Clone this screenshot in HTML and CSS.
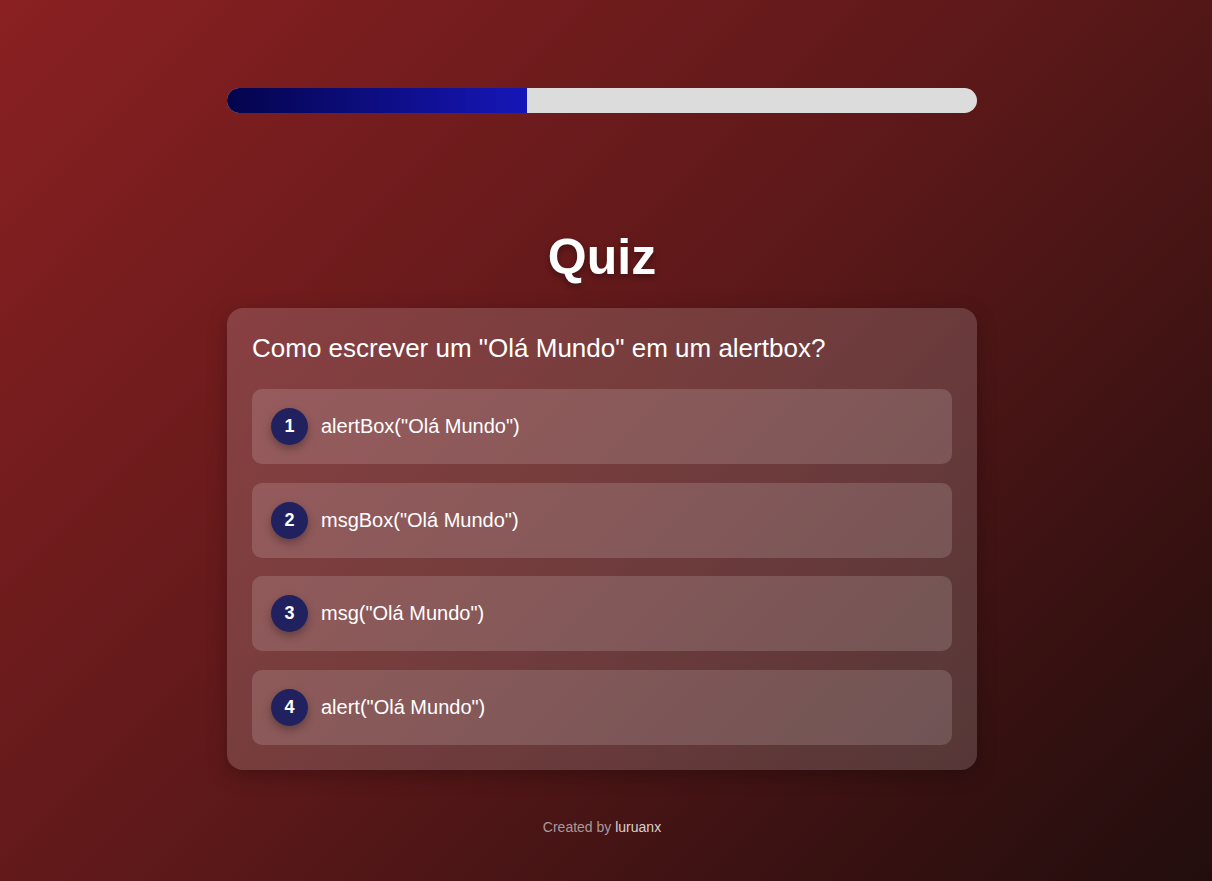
FILE: index.html
```html
<!DOCTYPE html>
<html lang="pt">
<head>
<meta charset="utf-8">
<title>Quiz</title>
<link rel="stylesheet" href="styles.css">
</head>
<body>
<main class="app">
  <div class="progress"><div class="progress-fill" style="width:40%"></div></div>
  <h1 class="title">Quiz</h1>
  <section class="card">
    <h2 class="question">Como escrever um "Olá Mundo" em um alertbox?</h2>
    <ul class="options">
      <li class="option"><span class="num">1</span><span class="label">alertBox("Olá Mundo")</span></li>
      <li class="option"><span class="num">2</span><span class="label">msgBox("Olá Mundo")</span></li>
      <li class="option"><span class="num">3</span><span class="label">msg("Olá Mundo")</span></li>
      <li class="option"><span class="num">4</span><span class="label">alert("Olá Mundo")</span></li>
    </ul>
  </section>
  <footer class="footer">Created by <a class="author" href="#">luruanx</a></footer>
</main>
</body>
</html>
```
FILE: styles.css
```css
html, body {
  margin: 0;
  min-height: 100%;
}
body {
  min-height: 100vh;
  box-sizing: border-box;
  padding-right: 8px;
  font-family: "Liberation Sans", Arial, sans-serif;
  color: #fff;
  background: linear-gradient(135deg, #8a2022 0%, #5c1819 50%, #220d0d 100%);
}
.app {
  width: 750px;
  margin: 0 auto;
  padding-top: 88px;
  display: flex;
  flex-direction: column;
}
.progress {
  height: 25px;
  border-radius: 13px;
  background: #dcdcdc;
  overflow: hidden;
}
.progress-fill {
  height: 100%;
  background: linear-gradient(to right, #04044c, #1616b9);
}
.title {
  margin: 115px 0 22px;
  font-size: 50px;
  line-height: 58px;
  font-weight: 700;
  text-align: center;
  text-shadow: 0 3px 6px rgba(0, 0, 0, 0.35);
}
.card {
  padding: 25px;
  border-radius: 16px;
  background: rgba(255, 255, 255, 0.16);
  box-shadow: 0 6px 20px rgba(0, 0, 0, 0.25);
}
.question {
  margin: 0 0 26px;
  font-size: 26px;
  line-height: 30px;
  font-weight: 400;
}
.options {
  list-style: none;
  margin: 0;
  padding: 0;
  display: flex;
  flex-direction: column;
  gap: 18.67px;
}
.option {
  display: flex;
  align-items: center;
  gap: 13px;
  height: 75px;
  box-sizing: border-box;
  padding: 0 19px;
  border-radius: 10px;
  background: rgba(255, 255, 255, 0.15);
  font-size: 20px;
}
.num {
  width: 37px;
  height: 37px;
  flex: none;
  border-radius: 50%;
  background: #22215f;
  box-shadow: 0 4px 8px rgba(0, 0, 0, 0.3);
  display: flex;
  align-items: center;
  justify-content: center;
  font-weight: 700;
  font-size: 18px;
}
.footer {
  margin-top: 49px;
  text-align: center;
  font-size: 14px;
  color: #a89a9a;
  padding-bottom: 40px;
}
.author {
  color: #d8d0d0;
  text-decoration: none;
}
```
